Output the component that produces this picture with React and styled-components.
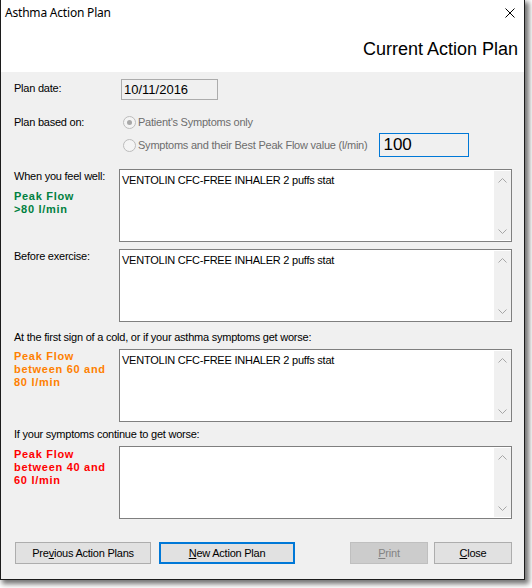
import React from "react";
import styled, { createGlobalStyle } from "styled-components";

const GlobalStyle = createGlobalStyle`
  html, body { margin: 0; padding: 0; background: #ffffff; }
  body { width: 532px; height: 588px; overflow: hidden; }
  * { box-sizing: border-box; }
`;

const Window = styled.div`
  width: 525px;
  height: 580px;
  border: 1px solid #1c1c1c;
  border-top: none;
  background: #f0f0f0;
  box-shadow: 3px 3px 5px 1px rgba(0, 0, 0, 0.55);
  display: flex;
  flex-direction: column;
  font-family: "Liberation Sans", Arial, sans-serif;
  font-size: 11px;
  letter-spacing: -0.23px;
  color: #000;
`;

const TitleBar = styled.div`
  height: 25px;
  background: #fff;
  display: flex;
  align-items: center;
  justify-content: space-between;
  padding: 0 9px 0 4px;
`;

const TitleText = styled.span`
  font-family: "Noto Sans", "Open Sans", sans-serif;
  font-size: 12px;
  letter-spacing: -0.2px;
  line-height: 16px;
`;

const Header = styled.div`
  height: 47px;
  background: #fff;
  display: flex;
  justify-content: flex-end;
  padding: 14px 6px 0 0;
`;

const HeaderTitle = styled.h1`
  margin: 0;
  font-family: "Liberation Sans", Arial, sans-serif;
  font-weight: normal;
  font-size: 18px;
  line-height: 20px;
  letter-spacing: 0;
`;

const Body = styled.div`
  flex: 1;
  display: flex;
  flex-direction: column;
  padding: 7px 12px 0 13px;
`;

const DateRow = styled.div`
  display: grid;
  grid-template-columns: 107px 97px;
  height: 21px;
`;

const Label = styled.div`
  line-height: 13px;
  white-space: nowrap;
  padding-top: ${(p) => p.$top || 0}px;
  margin-top: ${(p) => p.$mt || 0}px;
`;

const ReadOnlyBox = styled.div`
  border: 1px solid #acacac;
  background: #f0f0f0;
  font-size: 13px;
  letter-spacing: 0;
  line-height: 19px;
  padding-left: 2px;
`;

const BasedRow = styled.div`
  display: grid;
  grid-template-columns: 109px 1fr;
  margin-top: 14px;
`;

const Options = styled.div`
  display: flex;
  flex-direction: column;
  gap: 3px;
`;

const Option = styled.div`
  display: flex;
  align-items: center;
  height: ${(p) => p.$h}px;
  color: #6d6d6d;
  white-space: nowrap;
`;

const Radio = styled.span`
  width: 13px;
  height: 13px;
  border-radius: 50%;
  border: 1px solid #bcbcbc;
  background: #f4f4f4;
  margin-right: 2px;
  display: flex;
  align-items: center;
  justify-content: center;
  flex: none;
  &::after {
    content: "";
    width: 5px;
    height: 5px;
    border-radius: 50%;
    background: ${(p) => (p.$checked ? "#a8a8a8" : "transparent")};
  }
`;

const PeakInput = styled.div`
  width: 90px;
  height: 24px;
  margin-left: 12px;
  border: 1px solid #0078d7;
  background: #f0f0f0;
  color: #000;
  font-size: 17px;
  letter-spacing: 0;
  line-height: 22px;
  padding-left: 3px;
`;

const Section = styled.div`
  display: grid;
  grid-template-columns: 105px 1fr;
  margin-top: ${(p) => p.$mt}px;
`;

const LeftCol = styled.div`
  display: flex;
  flex-direction: column;
`;

const PeakText = styled.div`
  font-weight: bold;
  letter-spacing: 0.7px;
  line-height: 13px;
  color: ${(p) => p.$color};
  margin-top: ${(p) => p.$mt || 0}px;
`;

const Memo = styled.div`
  height: 73px;
  border: 1px solid #7f7f7f;
  background: #fff;
  display: flex;
`;

const MemoText = styled.div`
  flex: 1;
  padding: 4px 2px 0 2px;
  line-height: 13px;
  white-space: nowrap;
`;

const ScrollTrack = styled.div`
  width: 17px;
  margin: 1px 0;
  background: #f0f0f0;
  display: flex;
  flex-direction: column;
  justify-content: space-between;
  align-items: center;
  padding: 7px 0 6px;
`;

const ButtonRow = styled.div`
  display: flex;
  margin-top: 23px;
  padding-left: 1px;
`;

const Button = styled.div`
  height: 22px;
  width: ${(p) => p.$w}px;
  margin-left: ${(p) => p.$ml || 0}px;
  border: ${(p) => (p.$focused ? "2px solid #0078d7" : "1px solid #adadad")};
  background: ${(p) => (p.$disabled ? "#cccccc" : "#e1e1e1")};
  border-color: ${(p) => (p.$disabled ? "#bfbfbf" : p.$focused ? "#0078d7" : "#adadad")};
  color: ${(p) => (p.$disabled ? "#838383" : "#000")};
  display: flex;
  align-items: center;
  justify-content: center;
  white-space: nowrap;
  u { text-decoration: underline; text-underline-offset: 1px; }
`;

const Spacer = styled.div`
  flex: 1;
`;

const Chevron = ({ down }) => (
  <svg width="9" height="5" viewBox="0 0 9 5">
    <polyline
      points={down ? "0.5,0.5 4.5,4.5 8.5,0.5" : "0.5,4.5 4.5,0.5 8.5,4.5"}
      fill="none"
      stroke="#a6a6a6"
      strokeWidth="1"
    />
  </svg>
);

const CloseIcon = () => (
  <svg width="10" height="10" viewBox="0 0 10 10">
    <path d="M0.5 0.5 L9.5 9.5 M9.5 0.5 L0.5 9.5" stroke="#000" strokeWidth="1" />
  </svg>
);

const MemoBox = ({ text }) => (
  <Memo>
    <MemoText>{text}</MemoText>
    <ScrollTrack>
      <Chevron />
      <Chevron down />
    </ScrollTrack>
  </Memo>
);

const MED = "VENTOLIN CFC-FREE INHALER 2 puffs stat";

export default function App() {
  return (
    <>
      <GlobalStyle />
      <Window>
        <TitleBar>
          <TitleText>Asthma Action Plan</TitleText>
          <CloseIcon />
        </TitleBar>
        <Header>
          <HeaderTitle>Current Action Plan</HeaderTitle>
        </Header>
        <Body>
          <DateRow>
            <Label $top={3}>Plan date:</Label>
            <ReadOnlyBox>10/11/2016</ReadOnlyBox>
          </DateRow>

          <BasedRow>
            <Label $top={2}>Plan based on:</Label>
            <Options>
              <Option $h={16}>
                <Radio $checked />
                Patient's Symptoms only
              </Option>
              <Option $h={24}>
                <Radio />
                Symptoms and their Best Peak Flow value (l/min)
                <PeakInput>100</PeakInput>
              </Option>
            </Options>
          </BasedRow>

          <Section $mt={12}>
            <LeftCol>
              <Label $top={1}>When you feel well:</Label>
              <PeakText $color="#008040" $mt={7}>
                Peak Flow
                <br />
                &gt;80 l/min
              </PeakText>
            </LeftCol>
            <MemoBox text={MED} />
          </Section>

          <Section $mt={7}>
            <LeftCol>
              <Label $top={1}>Before exercise:</Label>
            </LeftCol>
            <MemoBox text={MED} />
          </Section>

          <Label $mt={9}>At the first sign of a cold, or if your asthma symptoms get worse:</Label>
          <Section $mt={5}>
            <LeftCol>
              <PeakText $color="#ff8000" $mt={1}>
                Peak Flow
                <br />
                between 60 and
                <br />
                80 l/min
              </PeakText>
            </LeftCol>
            <MemoBox text={MED} />
          </Section>

          <Label $mt={6}>If your symptoms continue to get worse:</Label>
          <Section $mt={5}>
            <LeftCol>
              <PeakText $color="#ff0000" $mt={2}>
                Peak Flow
                <br />
                between 40 and
                <br />
                60 l/min
              </PeakText>
            </LeftCol>
            <MemoBox text="" />
          </Section>

          <ButtonRow>
            <Button $w={136}>
              Pre<u>v</u>ious Action Plans
            </Button>
            <Button $w={136} $ml={8} $focused>
              <u>N</u>ew Action Plan
            </Button>
            <Spacer />
            <Button $w={78} $disabled>
              <u>P</u>rint
            </Button>
            <Button $w={78} $ml={6}>
              <u>C</u>lose
            </Button>
          </ButtonRow>
        </Body>
      </Window>
    </>
  );
}
